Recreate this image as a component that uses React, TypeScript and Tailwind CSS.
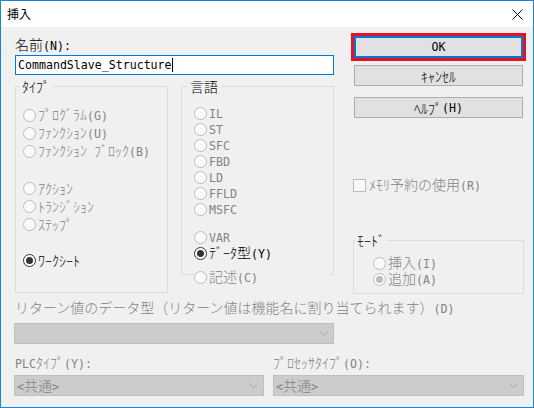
import type { ReactNode } from "react";

// ASCII runs are set in a narrow mono face so they sit on the half-width grid
function T({ children }: { children: string }) {
  const parts = children.split(/([\x20-\x7e]+)/);
  return (
    <>
      {parts.map((p, i) =>
        i % 2 ? (
          <span key={i} className="font-['DejaVu_Sans_Mono',monospace] text-[11.6px] font-normal">
            {p}
          </span>
        ) : (
          p
        )
      )}
    </>
  );
}

const GRAY = "text-[#838383]";

function Radio({
  label,
  checked = false,
  disabled = true,
  h = "h-[18px]",
  cls = "",
}: {
  label: string;
  checked?: boolean;
  disabled?: boolean;
  h?: string;
  cls?: string;
}) {
  return (
    <div className={`flex items-center ${h} ${cls}`}>
      <span
        className={`w-[13px] h-[13px] rounded-full border flex items-center justify-center shrink-0 ${
          disabled ? "border-[#bcbcbc] bg-[#fafafa]" : "border-[#333333] bg-white"
        }`}
      >
        {checked && (
          <span
            className={`w-[7px] h-[7px] rounded-full ${disabled ? "bg-[#bcbcbc]" : "bg-[#333333]"}`}
          />
        )}
      </span>
      <span className={`ml-[2px] whitespace-pre ${disabled ? GRAY : "text-black"}`}>
        <T>{label}</T>
      </span>
    </div>
  );
}

function Group({
  legend,
  legendCls,
  cls,
  children,
}: {
  legend: string;
  legendCls: string;
  cls: string;
  children: ReactNode;
}) {
  return (
    <fieldset className={`border border-[#dcdcdc] ${cls}`}>
      <legend className={`h-[16px] leading-[16px] ${legendCls}`}>
        <T>{legend}</T>
      </legend>
      {children}
    </fieldset>
  );
}

function Button({ label, cls = "" }: { label: string; cls?: string }) {
  return (
    <div
      className={`h-[21px] w-[169px] ml-[3px] border border-[#adadad] bg-[#e1e1e1] flex items-center justify-center ${cls}`}
    >
      <T>{label}</T>
    </div>
  );
}

function Chevron() {
  return (
    <svg width="9" height="5" viewBox="0 0 9 5" className="shrink-0">
      <path d="M0.5 0.5 L4.5 4.5 L8.5 0.5" fill="none" stroke="#a6a6a6" strokeWidth="1" />
    </svg>
  );
}

function Combo({ text, cls }: { text?: string; cls: string }) {
  return (
    <div
      className={`h-[21px] border border-[#bfbfbf] bg-[#cccccc] flex items-center justify-between pl-[2px] pr-[5px] ${GRAY} ${cls}`}
    >
      <span>{text ? <T>{text}</T> : null}</span>
      <Chevron />
    </div>
  );
}

export default function App() {
  return (
    <div className="w-[534px] h-[408px] border border-[#1883d7] bg-[#f0f0f0] flex flex-col overflow-hidden font-['Noto_Sans_CJK_JP',sans-serif] font-light text-[14px] leading-[16px] text-black">
      {/* Title bar */}
      <div className="h-[26px] shrink-0 bg-white flex items-center justify-between pl-[6px] pr-[10px]">
        <span className="text-[12px] font-normal">挿入</span>
        <svg width="11" height="11" viewBox="0 0 11 11">
          <path d="M0.5 0.5 L10.5 10.5 M10.5 0.5 L0.5 10.5" stroke="#000" strokeWidth="1" />
        </svg>
      </div>

      {/* Upper area */}
      <div className="flex pl-[14px] shrink-0">
        <div className="w-[319px] flex flex-col">
          <div className="h-[16px] mt-[9px]">
            <T>名前(N):</T>
          </div>
          <div className="mt-[3px] h-[20px] w-[319px] border border-[#0078d7] bg-white flex items-center pl-[2px]">
            <span className="font-['DejaVu_Sans_Mono',monospace] text-[11.6px] font-normal">CommandSlave_Structure</span>
            <span className="inline-block w-px h-[14px] bg-black" />
          </div>

          <div className="flex mt-[3px] items-start">
            <Group legend="ﾀｲﾌﾟ" legendCls="ml-[4px] px-[2px]" cls="w-[153px] h-[215px]">
              <div className="pt-[12px] pl-[7px]">
                <Radio label="ﾌﾟﾛｸﾞﾗﾑ(G)" />
                <Radio label="ﾌｧﾝｸｼｮﾝ(U)" />
                <Radio label="ﾌｧﾝｸｼｮﾝ ﾌﾞﾛｯｸ(B)" />
                <Radio label="ｱｸｼｮﾝ" cls="mt-[19px]" />
                <Radio label="ﾄﾗﾝｼﾞｼｮﾝ" />
                <Radio label="ｽﾃｯﾌﾟ" />
                <Radio label="ﾜｰｸｼｰﾄ" checked disabled={false} cls="mt-[18px]" />
              </div>
            </Group>

            <div className="ml-[13px] w-[153px] flex flex-col">
              <Group legend="言語" legendCls="ml-[5px] px-[3px]" cls="w-[153px] h-[197px]">
                <div className="pt-[11px] pl-[12px]">
                  <Radio label="IL" h="h-[16px]" />
                  <Radio label="ST" h="h-[16px]" />
                  <Radio label="SFC" h="h-[16px]" />
                  <Radio label="FBD" h="h-[16px]" />
                  <Radio label="LD" h="h-[16px]" />
                  <Radio label="FFLD" h="h-[16px]" />
                  <Radio label="MSFC" h="h-[16px]" />
                  <Radio label="VAR" h="h-[16px]" cls="mt-[12px]" />
                  <Radio label="ﾃﾞｰﾀ型(Y)" h="h-[16px]" checked disabled={false} />
                </div>
              </Group>
              <div className="relative -mt-[6px] ml-[13px] w-[136px] bg-[#f0f0f0]">
                <Radio label="記述(C)" h="h-[16px]" />
              </div>
            </div>
          </div>
        </div>

        <div className="w-[175px] ml-[17px] flex flex-col pt-[6px]">
          <div className="h-[28px] w-[175px] border-[3px] border-[#e81123]">
            <div className="h-full w-full border-2 border-[#0078d7] bg-[#e1e1e1] flex items-center justify-center">
              <T>OK</T>
            </div>
          </div>
          <Button label="ｷｬﾝｾﾙ" cls="mt-[4px]" />
          <Button label="ﾍﾙﾌﾟ(H)" cls="mt-[11px]" />

          <div className="mt-[59px] ml-[2px] h-[16px] flex items-center">
            <span className="w-[13px] h-[13px] border border-[#bcbcbc] bg-[#fafafa] shrink-0" />
            <span className={`ml-[3px] ${GRAY}`}>
              <T>ﾒﾓﾘ予約の使用(R)</T>
            </span>
          </div>

          <Group legend="ﾓｰﾄﾞ" legendCls="ml-[1px] px-[2px]" cls="mt-[39px] ml-[2px] w-[171px] h-[62px]">
            <div className="pt-[7px] pl-[19px]">
              <Radio label="挿入(I)" h="h-[16px]" />
              <Radio label="追加(A)" h="h-[16px]" checked />
            </div>
          </Group>
        </div>
      </div>

      {/* Lower area */}
      <div className="flex flex-col pl-[13px]">
        <div className={`mt-[5px] ml-[1px] h-[16px] whitespace-nowrap ${GRAY}`}>
          <T>リターン値のデータ型（リターン値は機能名に割り当てられます）(D)</T>
        </div>
        <Combo cls="mt-[8px] w-[320px]" />

        <div className={`mt-[10px] h-[16px] flex ${GRAY}`}>
          <div className="w-[259px] pl-[1px]">
            <T>PLCﾀｲﾌﾟ(Y):</T>
          </div>
          <div>
            <T>ﾌﾟﾛｾｯｻﾀｲﾌﾟ(O):</T>
          </div>
        </div>
        <div className="mt-[5px] flex">
          <Combo text="<共通>" cls="w-[250px]" />
          <Combo text="<共通>" cls="ml-[9px] w-[251px]" />
        </div>
      </div>
    </div>
  );
}
